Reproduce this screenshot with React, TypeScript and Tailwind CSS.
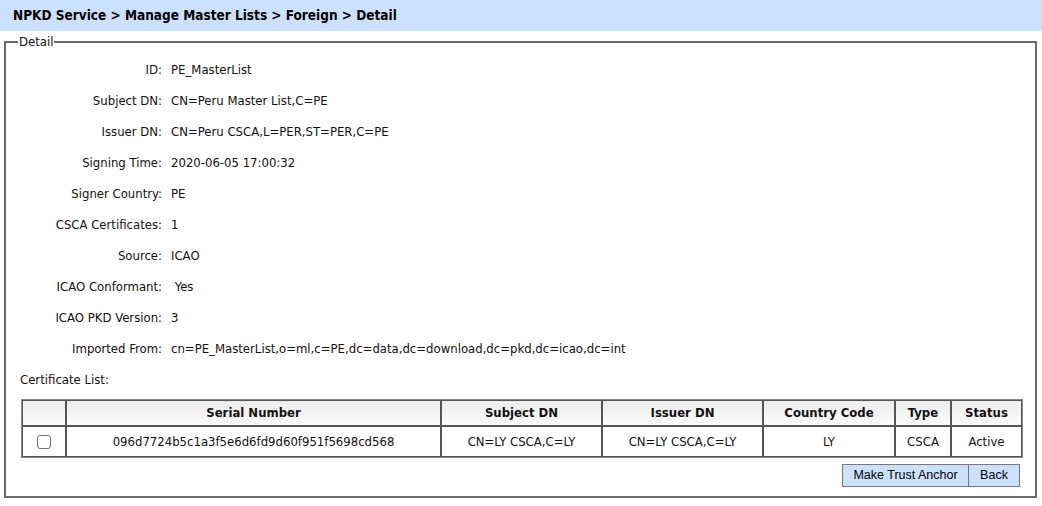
import React from "react";

const FONT = "font-['DejaVu_Sans_Condensed','Liberation_Sans',sans-serif]";

const details: [string, string][] = [
  ["ID:", "PE_MasterList"],
  ["Subject DN:", "CN=Peru Master List,C=PE"],
  ["Issuer DN:", "CN=Peru CSCA,L=PER,ST=PER,C=PE"],
  ["Signing Time:", "2020-06-05 17:00:32"],
  ["Signer Country:", "PE"],
  ["CSCA Certificates:", "1"],
  ["Source:", "ICAO"],
  ["ICAO Conformant:", "\u00a0Yes"],
  ["ICAO PKD Version:", "3"],
  ["Imported From:", "cn=PE_MasterList,o=ml,c=PE,dc=data,dc=download,dc=pkd,dc=icao,dc=int"],
];

const th = "border border-[#555] h-[26px] font-bold text-center bg-gradient-to-b from-[#eeeeee] to-[#fafafa]";
const td = "border border-[#555] h-[31px] text-center";

export default function App() {
  return (
    <div className={`${FONT} text-[13px] text-[#111] bg-white w-[1042px] h-[506px]`}>
      <div className="h-[31px] bg-[#cce0ff] flex items-center pl-[13px] font-bold text-[13.5px] text-black">
        NPKD Service &gt; Manage Master Lists &gt; Foreign &gt; Detail
      </div>

      <fieldset className="ml-[4px] mt-[3px] w-[1033px] border-2 border-[#6a6a6a] pb-[9px]">
        <legend className="ml-[12px] px-[1px] leading-[16px]">Detail</legend>

        <div className="pt-[4px]">
          {details.map(([k, v]) => (
            <div key={k} className="flex h-[31px] items-center">
              <div className="w-[156px] text-right">{k}</div>
              <div className="pl-[9px]">{v}</div>
            </div>
          ))}
          <div className="h-[31px] flex items-center pl-[14px]">Certificate List:</div>
        </div>

        <table className="ml-[15px] mt-[4px] w-[1000px] border-separate border-spacing-0 border border-[#888] table-fixed">
          <colgroup>
            <col className="w-[44px]" />
            <col className="w-[375px]" />
            <col className="w-[161px]" />
            <col className="w-[161px]" />
            <col className="w-[132px]" />
            <col className="w-[56px]" />
            <col className="w-[71px]" />
          </colgroup>
          <thead>
            <tr>
              <th className={th}></th>
              <th className={th}>Serial Number</th>
              <th className={th}>Subject DN</th>
              <th className={th}>Issuer DN</th>
              <th className={th}>Country Code</th>
              <th className={th}>Type</th>
              <th className={th}>Status</th>
            </tr>
          </thead>
          <tbody>
            <tr>
              <td className={td}>
                <div className="flex justify-center">
                  <input
                    type="checkbox"
                    className="appearance-none w-[14px] h-[14px] border border-[#767676] rounded-[3px] bg-white"
                  />
                </div>
              </td>
              <td className={td}>096d7724b5c1a3f5e6d6fd9d60f951f5698cd568</td>
              <td className={td}>CN=LY CSCA,C=LY</td>
              <td className={td}>CN=LY CSCA,C=LY</td>
              <td className={td}>LY</td>
              <td className={td}>CSCA</td>
              <td className={td}>Active</td>
            </tr>
          </tbody>
        </table>

        <div className="flex justify-end mt-[6px] mr-[15px] font-['Liberation_Sans',Arial,sans-serif] text-[12.5px]">
          <button className="h-[23px] w-[127px] bg-[#cce0ff] border border-[#777] text-black">
            Make Trust Anchor
          </button>
          <button className="h-[23px] w-[51px] bg-[#cce0ff] border border-l-0 border-[#777] text-black">
            Back
          </button>
        </div>
      </fieldset>
    </div>
  );
}
